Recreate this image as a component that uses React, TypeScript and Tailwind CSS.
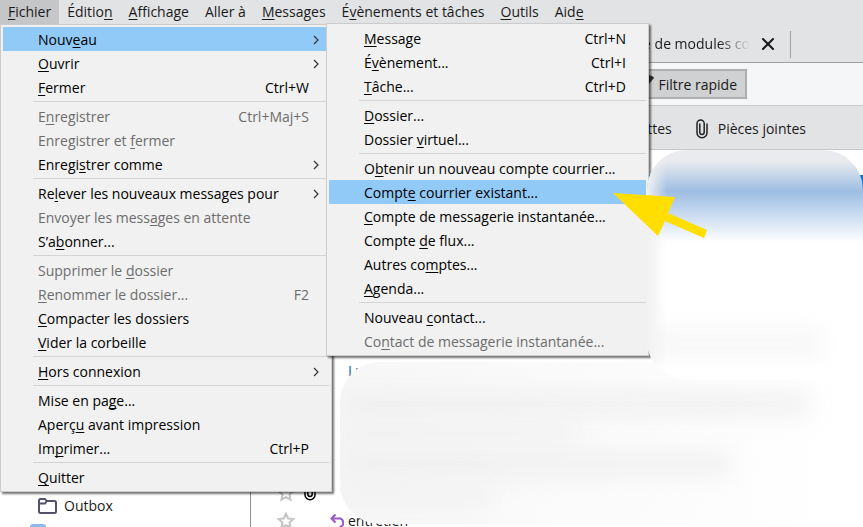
import React from 'react';
import { X } from 'lucide-react';

type Entry = { label?: string; keys?: string; off?: boolean; on?: boolean; arrow?: boolean; sub?: Entry[] };

// "_" marks the access key: the letter after it is underlined
const topMenus = ['_Fichier', 'Éditio_n', '_Affichage', 'Aller à', '_Messages', 'É_vènements et tâches', '_Outils', 'Aid_e'];

const nouveau: Entry[] = [
    { label: '_Message', keys: 'Ctrl+N' },
    { label: 'É_vènement...', keys: 'Ctrl+I' },
    { label: '_Tâche...', keys: 'Ctrl+D' },
    {},
    { label: '_Dossier...' },
    { label: 'Dossier _virtuel...' },
    {},
    { label: 'O_btenir un nouveau compte courrier...' },
    { label: 'Compt_e courrier existant...', on: true },
    { label: '_Compte de messagerie instantanée...' },
    { label: 'Compte _de flux...' },
    { label: 'Autres co_mptes...' },
    { label: '_Agenda...' },
    {},
    { label: 'Nouveau _contact...' },
    { label: 'Co_ntact de messagerie instantanée...', off: true },
];

const fichier: Entry[] = [
    { label: 'Nouv_eau', on: true, arrow: true, sub: nouveau },
    { label: '_Ouvrir', arrow: true },
    { label: '_Fermer', keys: 'Ctrl+W' },
    {},
    { label: 'E_nregistrer', keys: 'Ctrl+Maj+S', off: true },
    { label: 'Enregistrer et _fermer', off: true },
    { label: 'Enregi_strer comme', arrow: true },
    {},
    { label: 'Re_lever les nouveaux messages pour', arrow: true },
    { label: 'Envoyer les mess_ages en attente', off: true },
    { label: 'S’a_bonner...' },
    {},
    { label: 'Supprimer le _dossier', off: true },
    { label: '_Renommer le dossier...', keys: 'F2', off: true },
    { label: '_Compacter les dossiers' },
    { label: '_Vider la corbeille' },
    {},
    { label: '_Hors connexion', arrow: true },
    {},
    { label: 'Mise en pa_ge...' },
    { label: 'Aperç_u avant impression' },
    { label: 'Im_primer...', keys: 'Ctrl+P' },
    {},
    { label: '_Quitter' },
];

const Label = ({ text }: { text: string }) => {
    const i = text.indexOf('_');
    if (i < 0) return <span>{text}</span>;
    return (
        <span>
            {text.slice(0, i)}
            <span className="underline underline-offset-2 [text-decoration-skip-ink:none]">{text[i + 1]}</span>
            {text.slice(i + 2)}
        </span>
    );
};

const Menu = ({ items, className }: { items: Entry[]; className: string }) => (
    <ul
        className={`absolute border border-[#cccccc] bg-[#f1f1f1] p-0.5 shadow-[2px_2px_2px_rgba(0,0,0,0.55)] ${className}`}
    >
        {items.map((item, index) =>
            item.label ? (
                <li key={index} className="relative">
                    <button
                        disabled={item.off}
                        className={`flex h-6 w-full items-center justify-between pt-0.5 pl-[35px] pr-5 text-left whitespace-nowrap ${
                            item.on ? 'bg-[#91c9f7]' : ''
                        } ${item.off ? 'text-[#6d6d6d]' : 'text-black'}`}
                    >
                        <Label text={item.label} />
                        {item.keys && <span>{item.keys}</span>}
                        {item.arrow && (
                            <svg viewBox="0 0 6 10" className="-mr-2.5 h-2.5 w-1.5 fill-none stroke-[#333] stroke-[1.2]">
                                <path d="M1 1l4 4-4 4" />
                            </svg>
                        )}
                    </button>
                    {item.sub && <Menu items={item.sub} className="-top-1 left-[323px] w-[323px]" />}
                </li>
            ) : (
                <li key={index} role="separator" className="ml-[30px] flex h-[5px] items-center">
                    <span className="h-px w-full bg-[#d4d4d4]" />
                </li>
            )
        )}
    </ul>
);

const Clip = ({ className }: { className: string }) => (
    <svg viewBox="0 0 12 20" className={`h-5 w-3 fill-none ${className}`} strokeWidth="1.5" strokeLinecap="round">
        <path d="M3.8 5v8.2a2.2 2.2 0 0 0 4.4 0V4.6a3.6 3.6 0 0 0-7.2 0v9.2a5 5 0 0 0 10 0V5" />
    </svg>
);

const Star = () => (
    <svg viewBox="0 0 18 18" className="h-[18px] w-[18px] fill-none stroke-[#c4c4c6]" strokeWidth="2">
        <path d="M9 1.8l2.2 4.7 5.1.6-3.8 3.5 1 5.1L9 13.2l-4.5 2.5 1-5.1-3.8-3.5 5.1-.6z" />
    </svg>
);

const App = () => {
    return (
        <div className="relative flex h-screen flex-col overflow-hidden bg-white font-['Open_Sans',sans-serif] text-[14px] leading-6 text-[#1a1a1a]">
            <nav className="relative z-20 flex h-6 shrink-0 bg-[#e2e3e5]">
                {topMenus.map((name, index) => (
                    <button
                        key={name}
                        className={`h-6 px-2 leading-6 whitespace-nowrap ${index === 0 ? 'bg-[#c5c6c8]' : ''}`}
                    >
                        <Label text={name} />
                    </button>
                ))}
                <Menu items={fichier} className="top-full left-0 w-[332px]" />
            </nav>

            <div className="flex h-[39px] shrink-0 items-center border-b border-[#9fa0a2] bg-[#e2e3e5] pt-0.5">
                <div className="flex h-[27px] w-[791px] items-center justify-end gap-2 border-r border-[#9fa0a2] pr-3">
                    <span className="bg-linear-to-r from-[#1a1a1a] from-70% to-transparent bg-clip-text text-transparent">
                        e de modules co
                    </span>
                    <button aria-label="Fermer l’onglet">
                        <X size={20} strokeWidth={2.5} />
                    </button>
                </div>
            </div>

            <div className="flex h-[42px] shrink-0 items-center bg-[#f5f6f8]">
                <div className="flex w-[747px] justify-end">
                    <button className="flex h-[30px] items-center gap-1 border-2 border-[#adaeb0] bg-[#d0d1d3] px-2 pt-0.5">
                        <svg viewBox="0 0 14 16" className="mb-1 h-4 w-3.5 fill-[#333]">
                            <path d="M0 3a7 3 0 0 1 14 0L9 9v7H5V9z" />
                        </svg>
                        Filtre rapide
                    </button>
                </div>
            </div>

            <div className="flex h-[45px] shrink-0 items-center border-y border-[#c8c9cb] bg-[#e2e3e5] pt-0.5">
                <div className="flex w-[806px] items-center justify-end">
                    <span className="mr-6">Étiquettes</span>
                    <Clip className="mr-2.5 stroke-[#222]" />
                    <span>Pièces jointes</span>
                </div>
            </div>

            <main className="flex min-h-0 flex-1">
                <aside className="flex w-[251px] shrink-0 flex-col justify-end border-r border-[#8f8f91]">
                    <a href="#outbox" className="flex items-center gap-[7px] pl-[38px]">
                        <svg viewBox="0 0 19 16" className="h-4 w-[19px] fill-none stroke-[#53526b]" strokeWidth="2">
                            <path d="M1 14V2.5Q1 1 2.5 1H7l1.5 2H16.5Q18 3 18 4.5V13.5Q18 15 16.5 15H2.5Q1 15 1 13.5zM1 5.5h6l1.5-2" />
                        </svg>
                        Outbox
                    </a>
                    <span className="mt-1.5 ml-[30px] h-[3px] w-4 rounded-t-sm bg-[#8fb8ec]" />
                </aside>
                <section className="relative flex flex-1 flex-col">
                    <div className="mt-[25px] h-6 shrink-0 bg-[#0a78d7]" />
                    <div className="mt-40 pl-[97px] text-[#1b5fa8]">Lu</div>
                    <div className="mt-auto flex h-7 shrink-0 items-center pl-[26px]">
                        <Star />
                        <Clip className="mb-1 ml-[9px] stroke-black" />
                    </div>
                    <div className="-mb-2 flex h-7 shrink-0 items-center pl-[26px]">
                        <Star />
                        <svg viewBox="0 0 14 14" className="mr-1 ml-[35px] h-3.5 w-3.5 fill-none stroke-[#9a5bcb]" strokeWidth="2.2">
                            <path d="M5.5 0.5L1.5 4.5l4 4M2 4.5h6.5a4 4 0 0 1 1 8.5" />
                        </svg>
                        entretien
                    </div>

                    {/* hidden message rows */}
                    <div className="absolute top-0 right-0 left-[396px] z-30 h-[230px] overflow-hidden rounded-[40px] bg-white">
                        <div className="h-full bg-linear-to-b from-[#e9ebee] from-5% via-[#9dbde2] via-18% to-white to-40%" />
                        <div className="absolute top-[182px] left-0 h-6 w-44 bg-[#f5f5f5] blur-md" />
                        <div className="absolute inset-y-0 left-0 w-5 bg-linear-to-r from-[#f1f1f1] to-transparent" />
                        <div className="absolute inset-x-0 bottom-0 h-6 bg-linear-to-b from-transparent to-white" />
                    </div>
                    <div className="absolute top-[212px] left-[89px] h-[162px] w-[500px] overflow-hidden rounded-[40px] bg-linear-to-r from-[#f7f7f7] to-white">
                        <div className="mt-8 h-5 w-[470px] bg-[#eeeeee] blur-md" />
                        <div className="mt-2.5 h-5 w-[230px] bg-[#f0f0f0] blur-md" />
                        <div className="mt-2.5 h-5 w-[390px] bg-[#eeeeee] blur-md" />
                        <div className="mt-2.5 h-5 w-[150px] bg-[#f0f0f0] blur-md" />
                    </div>
                </section>
            </main>

            <svg viewBox="0 0 95 46" className="absolute top-[193px] left-[613px] z-40 h-[46px] w-[95px] fill-[#ffde00]">
                <path d="M0 0l62 4-7 16 39 17-3 8-39-17-7 15z" />
            </svg>
        </div>
    );
};

export default App;
